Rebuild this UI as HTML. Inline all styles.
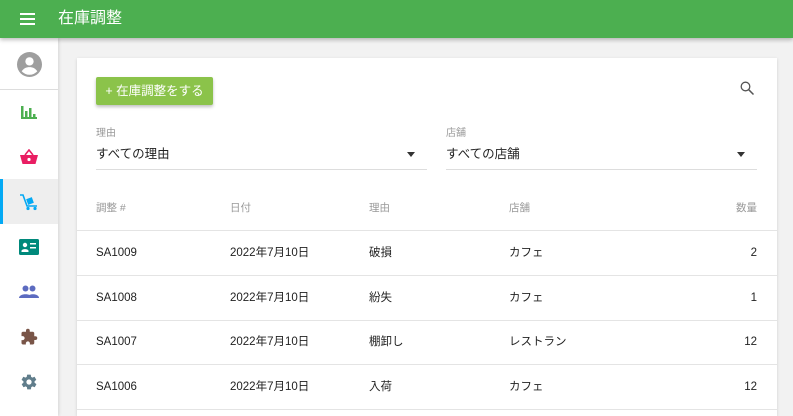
<!DOCTYPE html><html><head><meta charset="utf-8"><style>
*{margin:0;padding:0;box-sizing:border-box}
html,body{width:793px;height:416px;overflow:hidden}
body{background:#f2f2f2;font-family:"Liberation Sans","Noto Sans CJK JP",sans-serif;position:relative;color:#222}
.hd{position:absolute;left:0;top:0;width:793px;height:38px;background:#4caf50;box-shadow:0 2px 4px rgba(0,0,0,.25);z-index:3}
.hd .t{position:absolute;left:58px;top:9px;color:#fff;font-size:16px;line-height:20px}
.sb{position:absolute;left:0;top:38px;width:58px;height:378px;background:#fff;box-shadow:1px 0 3px rgba(0,0,0,.12);z-index:2}
.it{position:absolute;left:0;width:58px;height:45px;display:flex;align-items:center;justify-content:center}
.card{position:absolute;left:77px;top:58px;width:700px;height:358px;background:#fff;box-shadow:0 1px 3px rgba(0,0,0,.15);overflow:hidden}
.btn{position:absolute;left:19px;top:19px;width:117px;height:28px;background:#8bc34a;color:#fff;font-size:12.5px;line-height:28px;text-align:center;box-shadow:0 2px 3px rgba(0,0,0,.25);border-radius:2px}
.lb{position:absolute;font-size:10px;color:#999;line-height:12px}
.vl{position:absolute;font-size:12.5px;color:#222;line-height:16px}
.ul{position:absolute;height:1px;background:#ddd}
.tri{position:absolute;width:0;height:0;border-left:4.5px solid transparent;border-right:4.5px solid transparent;border-top:5px solid #333}
.th{position:absolute;top:143px;font-size:10.5px;color:#999;line-height:14px}
.rl{position:absolute;left:0;width:700px;height:1px;background:#e4e4e4}
.c{position:absolute;font-size:11.5px;color:#222;line-height:14px}
</style></head><body>
<div class="hd"><svg style="position:absolute;left:20px;top:13px" width="15" height="12"><rect y="0" width="15" height="2" fill="#fff"/><rect y="5" width="15" height="2" fill="#fff"/><rect y="10" width="15" height="2" fill="#fff"/></svg><div class="t">在庫調整</div></div>
<div class="sb">
<svg style="position:absolute;left:17px;top:14px" width="25" height="25" viewBox="0 0 24 24"><circle cx="12" cy="12" r="12" fill="#9e9e9e"/><circle cx="12" cy="9" r="4" fill="#fff"/><path d="M4.5 18.5c2-3 4.5-4 7.5-4s5.5 1 7.5 4a10 10 0 0 1-15 0z" fill="#fff"/></svg>
<div style="position:absolute;left:0;top:51px;width:58px;height:1px;background:#ddd"></div>
<div class="it" style="top:51px"><svg width="18" height="16"><rect x="1" y="2" width="2.5" height="13" fill="#4caf50"/><rect x="5" y="7" width="2.5" height="8" fill="#4caf50"/><rect x="9" y="4" width="2.5" height="11" fill="#4caf50"/><rect x="13" y="10" width="2.5" height="5" fill="#4caf50"/><rect x="1" y="13" width="16" height="2" fill="#4caf50"/></svg></div>
<div class="it" style="top:96px"><svg width="20" height="16" viewBox="0 0 20 16"><path d="M6 6 L10 1 L14 6" stroke="#e91e63" stroke-width="1.6" fill="none"/><path d="M1 6h18l-2.5 9h-13z" fill="#e91e63"/><circle cx="10" cy="10.5" r="1.6" fill="#fff"/></svg></div>
<div class="it" style="top:141px;background:#eee"><div style="position:absolute;left:0;top:0;width:3px;height:45px;background:#03a9f4"></div><svg width="20" height="18" viewBox="0 0 20 18"><path d="M1 2h3l4 11h10" stroke="#03a9f4" stroke-width="1.6" fill="none"/><rect x="8" y="5" width="6" height="6" fill="#03a9f4" transform="rotate(-20 11 8)"/><circle cx="9" cy="15.5" r="1.6" fill="#03a9f4"/><circle cx="16" cy="15.5" r="1.6" fill="#03a9f4"/></svg></div>
<div class="it" style="top:186px"><svg width="20" height="16"><rect x="0" y="0" width="20" height="16" rx="1.5" fill="#00897b"/><circle cx="6" cy="6" r="2.2" fill="#fff"/><path d="M2.5 12c0-2.5 7-2.5 7 0v1h-7z" fill="#fff"/><rect x="11" y="4" width="6" height="1.5" fill="#fff"/><rect x="11" y="8" width="6" height="1.5" fill="#fff"/></svg></div>
<div class="it" style="top:231px"><svg width="20" height="13" viewBox="0 0 20 13"><circle cx="6.5" cy="3.5" r="3" fill="#5c6bc0"/><circle cx="13.5" cy="3.5" r="3" fill="#5c6bc0"/><path d="M0 13c0-5 13-5 13 0z" fill="#5c6bc0"/><path d="M8 13c0-5 12-5 12 0z" fill="#5c6bc0"/></svg></div>
<div class="it" style="top:276px"><svg width="18" height="18" viewBox="0 0 24 24"><path d="M20.5 11H19V7c0-1.1-.9-2-2-2h-4V3.5a2.5 2.5 0 0 0-5 0V5H4c-1.1 0-2 .9-2 2v3.8h1.5c1.5 0 2.7 1.2 2.7 2.7S5 16.2 3.5 16.2H2V20c0 1.1.9 2 2 2h3.8v-1.5c0-1.5 1.2-2.7 2.7-2.7s2.7 1.2 2.7 2.7V22H17c1.1 0 2-.9 2-2v-4h1.5a2.5 2.5 0 0 0 0-5z" fill="#795548"/></svg></div>
<div class="it" style="top:321px"><svg width="18" height="18" viewBox="0 0 24 24"><path d="M19.4 13c.04-.3.1-.7.1-1s-.03-.7-.1-1l2.1-1.6c.2-.15.25-.4.1-.6l-2-3.5c-.1-.2-.4-.3-.6-.2l-2.5 1c-.5-.4-1.1-.7-1.7-1l-.4-2.6c0-.2-.2-.4-.5-.4h-4c-.25 0-.45.2-.5.4l-.4 2.6c-.6.3-1.200.6-1.7 1l-2.5-1c-.2-.1-.5 0-.6.2l-2 3.5c-.1.2-.1.5.1.6L4.6 11c0 .3-.1.7-.1 1s0 .7.1 1l-2.1 1.6c-.2.2-.25.4-.1.6l2 3.5c.1.2.4.3.6.2l2.5-1c.5.4 1.1.7 1.7 1l.4 2.6c0 .25.25.4.5.4h4c.25 0 .45-.2.5-.4l.4-2.6c.6-.3 1.2-.6 1.7-1l2.5 1c.2.1.5 0 .6-.2l2-3.5c.1-.2.05-.5-.1-.6zM12 15.5a3.5 3.5 0 1 1 0-7 3.5 3.5 0 0 1 0 7z" fill="#607d8b"/></svg></div>
</div>
<div class="card">
<div class="btn">+ 在庫調整をする</div>
<svg style="position:absolute;left:663px;top:23px" width="15" height="15" viewBox="0 0 15 15"><circle cx="5.5" cy="5.5" r="4.3" stroke="#555" stroke-width="1.3" fill="none"/><path d="M8.7 8.7L13.5 13.5" stroke="#555" stroke-width="1.5"/></svg>
<div class="lb" style="left:19px;top:70px">理由</div>
<div class="vl" style="left:19px;top:88px">すべての理由</div>
<div class="tri" style="left:330px;top:94px"></div>
<div class="ul" style="left:19px;top:111px;width:331px"></div>
<div class="lb" style="left:369px;top:70px">店舗</div>
<div class="vl" style="left:369px;top:88px">すべての店舗</div>
<div class="tri" style="left:660px;top:94px"></div>
<div class="ul" style="left:369px;top:111px;width:311px"></div>
<div class="th" style="left:19px">調整 #</div><div class="th" style="left:153px">日付</div><div class="th" style="left:292px">理由</div><div class="th" style="left:432px">店舗</div><div class="th" style="right:20px">数量</div>
<div class="rl" style="top:172px"></div><div class="rl" style="top:217px"></div><div class="rl" style="top:262px"></div><div class="rl" style="top:306px"></div><div class="rl" style="top:351px"></div>
<div class="c" style="left:19px;top:188px">SA1009</div><div class="c" style="left:153px;top:188px">2022年7月10日</div><div class="c" style="left:292px;top:188px">破損</div><div class="c" style="left:432px;top:188px">カフェ</div><div class="c" style="right:20px;top:188px">2</div>
<div class="c" style="left:19px;top:233px">SA1008</div><div class="c" style="left:153px;top:233px">2022年7月10日</div><div class="c" style="left:292px;top:233px">紛失</div><div class="c" style="left:432px;top:233px">カフェ</div><div class="c" style="right:20px;top:233px">1</div>
<div class="c" style="left:19px;top:277px">SA1007</div><div class="c" style="left:153px;top:277px">2022年7月10日</div><div class="c" style="left:292px;top:277px">棚卸し</div><div class="c" style="left:432px;top:277px">レストラン</div><div class="c" style="right:20px;top:277px">12</div>
<div class="c" style="left:19px;top:322px">SA1006</div><div class="c" style="left:153px;top:322px">2022年7月10日</div><div class="c" style="left:292px;top:322px">入荷</div><div class="c" style="left:432px;top:322px">カフェ</div><div class="c" style="right:20px;top:322px">12</div>
</div>
</body></html>
